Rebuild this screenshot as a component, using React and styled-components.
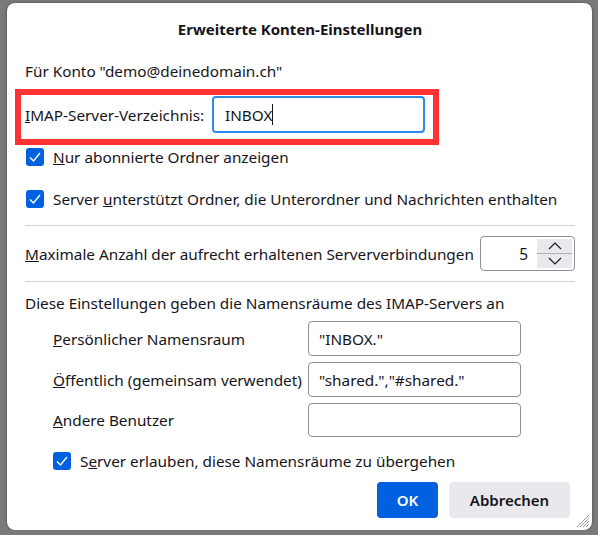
import React from "react";
import styled, { createGlobalStyle } from "styled-components";

const GlobalStyle = createGlobalStyle`
  body {
    margin: 0;
    background: #7a7a7a;
    font-family: "Noto Sans", "Open Sans", sans-serif;
    color: #15141a;
  }
`;

const Dialog = styled.div`
  position: relative;
  box-sizing: border-box;
  margin: 3px 0 0 7px;
  width: 585px;
  height: 527px;
  background: #ffffff;
  border-radius: 8px;
  box-shadow: 0 0 3px rgba(0, 0, 0, 0.45);
  padding: 0 17px 0 18px;
  display: flex;
  flex-direction: column;
  font-size: 15.3px;
`;

const Title = styled.div`
  padding-top: 16px;
  line-height: 20px;
  text-align: center;
  font-weight: 700;
  font-size: 15px;
`;

const Line = styled.div`
  line-height: 20px;
  margin-top: ${(p) => p.$top || 0}px;
  padding-left: ${(p) => p.$indent || 0}px;
  white-space: nowrap;
`;

const Highlight = styled.div`
  box-sizing: border-box;
  margin: 8px 0 0 -10px;
  width: 424px;
  height: 56px;
  border: 6px solid #ff3333;
  padding: 1px 8px 6px 4px;
  display: flex;
  align-items: center;
  justify-content: space-between;
`;

const FocusField = styled.div`
  box-sizing: border-box;
  width: 213px;
  height: 37px;
  border: 2px solid #2b8cec;
  border-radius: 4px;
  padding-left: 11px;
  display: flex;
  align-items: center;
`;

const Caret = styled.span`
  display: inline-block;
  width: 1px;
  height: 21px;
  background: #15141a;
`;

const CheckRow = styled.label`
  display: flex;
  align-items: center;
  gap: 9px;
  height: 24px;
  margin-top: ${(p) => p.$top || 0}px;
  padding-left: ${(p) => p.$indent || 1}px;
  white-space: nowrap;
`;

const Box = styled.span`
  width: 18px;
  height: 18px;
  border-radius: 3px;
  background: #0061e0;
  display: flex;
  align-items: center;
  justify-content: center;
  flex: none;
`;

const Separator = styled.hr`
  border: none;
  border-top: 1px solid #cfcfd8;
  margin: ${(p) => p.$top}px 0 ${(p) => p.$bottom}px;
`;

const SpinRow = styled.div`
  display: flex;
  align-items: center;
  justify-content: space-between;
  height: 35px;
`;

const Spinner = styled.div`
  box-sizing: border-box;
  width: 95px;
  height: 35px;
  border: 1px solid #8f8f9d;
  border-radius: 4px;
  display: flex;
  align-items: center;
  padding: 2px 2px 2px 0;
`;

const SpinValue = styled.div`
  flex: 1;
  text-align: right;
  padding-right: 9px;
  font-size: 15.5px;
`;

const SpinButtons = styled.div`
  width: 35px;
  height: 100%;
  display: flex;
  flex-direction: column;
  gap: 1px;
  background: #b0b0b8;
`;

const SpinButton = styled.div`
  flex: 1;
  background: #e9e9ed;
  display: flex;
  align-items: center;
  justify-content: center;
`;

const NsGrid = styled.div`
  display: grid;
  grid-template-columns: 255px 213px;
  row-gap: 6px;
  margin-top: 8px;
  padding-left: 28px;
  align-items: center;
`;

const Field = styled.div`
  box-sizing: border-box;
  height: ${(p) => p.$h || 35}px;
  border: 1px solid #8f8f9d;
  border-radius: 4px;
  padding-left: 10px;
  display: flex;
  align-items: center;
  white-space: nowrap;
`;

const Buttons = styled.div`
  display: flex;
  justify-content: flex-end;
  gap: 11px;
  margin-top: 9px;
  padding-right: 5px;
`;

const Button = styled.button`
  height: 36px;
  min-width: ${(p) => p.$w}px;
  border: none;
  border-radius: 4px;
  font-family: inherit;
  font-size: 15px;
  font-weight: 600;
  background: ${(p) => (p.$primary ? "#0061e0" : "#e9e9ed")};
  color: ${(p) => (p.$primary ? "#ffffff" : "#15141a")};
`;

const Grip = styled.svg`
  position: absolute;
  right: 2px;
  bottom: 2px;
`;

const Check = () => (
  <Box>
    <svg width="14" height="14" viewBox="0 0 14 14">
      <polyline points="2,7.5 5.5,11 12,3" fill="none" stroke="#fff" strokeWidth="1.4" />
    </svg>
  </Box>
);

const Chevron = ({ up }) => (
  <svg width="14" height="8" viewBox="0 0 14 8">
    <polyline
      points={up ? "1,7 7,1 13,7" : "1,1 7,7 13,1"}
      fill="none"
      stroke="#15141a"
      strokeWidth="1.1"
    />
  </svg>
);

export default function App() {
  return (
    <>
      <GlobalStyle />
      <Dialog>
        <Title>Erweiterte Konten-Einstellungen</Title>
        <Line $top={22}>Für Konto "demo@deinedomain.ch"</Line>
        <Highlight>
          <span>
            <u>I</u>MAP-Server-Verzeichnis:
          </span>
          <FocusField>
            INBOX
            <Caret />
          </FocusField>
        </Highlight>
        <CheckRow>
          <Check />
          <span>
            <u>N</u>ur abonnierte Ordner anzeigen
          </span>
        </CheckRow>
        <CheckRow $top={18}>
          <Check />
          <span>
            Server <u>u</u>nterstützt Ordner, die Unterordner und Nachrichten enthalten
          </span>
        </CheckRow>
        <Separator $top={14} $bottom={10} />
        <SpinRow>
          <span>
            <u>M</u>aximale Anzahl der aufrecht erhaltenen Serververbindungen
          </span>
          <Spinner>
            <SpinValue>5</SpinValue>
            <SpinButtons>
              <SpinButton>
                <Chevron up />
              </SpinButton>
              <SpinButton>
                <Chevron />
              </SpinButton>
            </SpinButtons>
          </Spinner>
        </SpinRow>
        <Separator $top={10} $bottom={11} />
        <Line>Diese Einstellungen geben die Namensräume des IMAP-Servers an</Line>
        <NsGrid>
          <span>
            <u>P</u>ersönlicher Namensraum
          </span>
          <Field>"INBOX."</Field>
          <span>
            <u>Ö</u>ffentlich (gemeinsam verwendet)
          </span>
          <Field>"shared.","#shared."</Field>
          <span>
            <u>A</u>ndere Benutzer
          </span>
          <Field $h={34} />
        </NsGrid>
        <CheckRow $top={12} $indent={28}>
          <Check />
          <span>
            S<u>e</u>rver erlauben, diese Namensräume zu übergehen
          </span>
        </CheckRow>
        <Buttons>
          <Button $primary $w={61}>OK</Button>
          <Button $w={121}>Abbrechen</Button>
        </Buttons>
        <Grip width="16" height="16" viewBox="0 0 16 16">
          <g stroke="#9a9a9a" strokeWidth="1">
            <line x1="15" y1="3" x2="3" y2="15" />
            <line x1="15" y1="6" x2="6" y2="15" />
            <line x1="15" y1="9" x2="9" y2="15" />
            <line x1="15" y1="12" x2="12" y2="15" />
          </g>
        </Grip>
      </Dialog>
    </>
  );
}
